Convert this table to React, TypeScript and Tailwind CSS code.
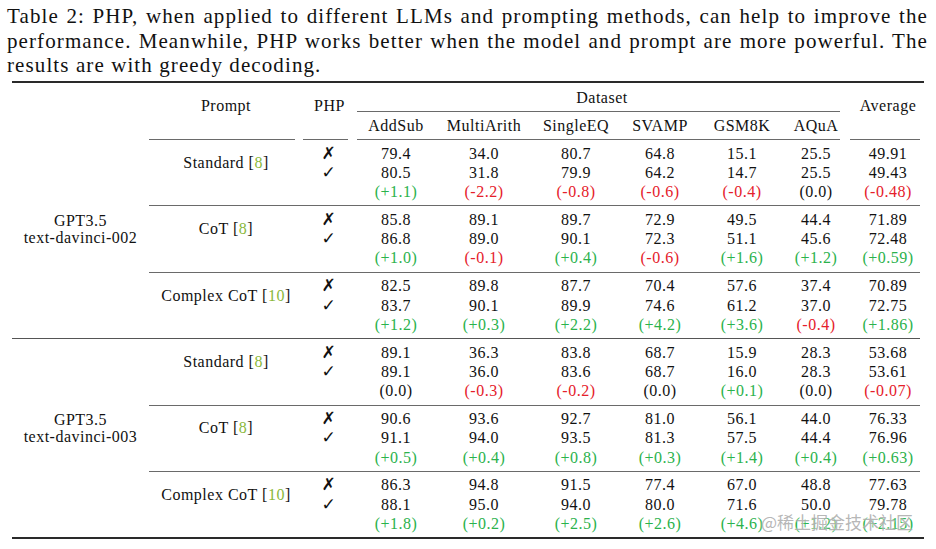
import React from "react";

type Delta = { t: string; c: "g" | "r" | "k" };
type Group = { prompt: string; cite: string; x: string[]; v: string[]; d: Delta[] };

const g = (t: string): Delta => ({ t, c: "g" });
const r = (t: string): Delta => ({ t, c: "r" });
const k = (t: string): Delta => ({ t, c: "k" });

const block1: Group[] = [
  {
    prompt: "Standard",
    cite: "8",
    x: ["79.4", "34.0", "80.7", "64.8", "15.1", "25.5", "49.91"],
    v: ["80.5", "31.8", "79.9", "64.2", "14.7", "25.5", "49.43"],
    d: [g("(+1.1)"), r("(-2.2)"), r("(-0.8)"), r("(-0.6)"), r("(-0.4)"), k("(0.0)"), r("(-0.48)")],
  },
  {
    prompt: "CoT",
    cite: "8",
    x: ["85.8", "89.1", "89.7", "72.9", "49.5", "44.4", "71.89"],
    v: ["86.8", "89.0", "90.1", "72.3", "51.1", "45.6", "72.48"],
    d: [g("(+1.0)"), r("(-0.1)"), g("(+0.4)"), r("(-0.6)"), g("(+1.6)"), g("(+1.2)"), g("(+0.59)")],
  },
  {
    prompt: "Complex CoT",
    cite: "10",
    x: ["82.5", "89.8", "87.7", "70.4", "57.6", "37.4", "70.89"],
    v: ["83.7", "90.1", "89.9", "74.6", "61.2", "37.0", "72.75"],
    d: [g("(+1.2)"), g("(+0.3)"), g("(+2.2)"), g("(+4.2)"), g("(+3.6)"), r("(-0.4)"), g("(+1.86)")],
  },
];

const block2: Group[] = [
  {
    prompt: "Standard",
    cite: "8",
    x: ["89.1", "36.3", "83.8", "68.7", "15.9", "28.3", "53.68"],
    v: ["89.1", "36.0", "83.6", "68.7", "16.0", "28.3", "53.61"],
    d: [k("(0.0)"), r("(-0.3)"), r("(-0.2)"), k("(0.0)"), g("(+0.1)"), k("(0.0)"), r("(-0.07)")],
  },
  {
    prompt: "CoT",
    cite: "8",
    x: ["90.6", "93.6", "92.7", "81.0", "56.1", "44.0", "76.33"],
    v: ["91.1", "94.0", "93.5", "81.3", "57.5", "44.4", "76.96"],
    d: [g("(+0.5)"), g("(+0.4)"), g("(+0.8)"), g("(+0.3)"), g("(+1.4)"), g("(+0.4)"), g("(+0.63)")],
  },
  {
    prompt: "Complex CoT",
    cite: "10",
    x: ["86.3", "94.8", "91.5", "77.4", "67.0", "48.8", "77.63"],
    v: ["88.1", "95.0", "94.0", "80.0", "71.6", "50.0", "79.78"],
    d: [g("(+1.8)"), g("(+0.2)"), g("(+2.5)"), g("(+2.6)"), g("(+4.6)"), g("(+1.2)"), g("(+2.15)")],
  },
];

const colW = ["w-[80px]", "w-[96px]", "w-[88px]", "w-[80px]", "w-[84px]", "w-[64px]", "w-[80px]"];
const heads = ["AddSub", "MultiArith", "SingleEQ", "SVAMP", "GSM8K", "AQuA"];

const colorOf = (c: "g" | "r" | "k") =>
  c === "g" ? "text-[#2bb24c]" : c === "r" ? "text-[#e5202a]" : "text-[#111]";

function Cite({ n }: { n: string }) {
  return (
    <span>
      [<span className="text-[#8ab83a]">{n}</span>]
    </span>
  );
}

function GroupRows({ grp, last }: { grp: Group; last: boolean }) {
  return (
    <div className="flex flex-col">
      <div className="flex pt-[3.5px] pb-[4px]">
        <div className="w-[154px] flex flex-col">
          <div className="h-[38.6px] flex items-center justify-center">
            <span>
              {grp.prompt} <Cite n={grp.cite} />
            </span>
          </div>
        </div>
        <div className="w-[53px] pr-[2px] flex flex-col items-center [font-family:DejaVu_Sans,sans-serif] text-[17px] tracking-normal">
          <div className="h-[19.3px] leading-[19.3px] font-bold">✗</div>
          <div className="h-[19.3px] leading-[19.3px]">✓</div>
          <div className="h-[19.3px]"></div>
        </div>
        {colW.map((w, i) => (
          <div key={i} className={`${w} flex flex-col items-center`}>
            <div className="h-[19.3px] leading-[19.3px]">{grp.x[i]}</div>
            <div className="h-[19.3px] leading-[19.3px]">{grp.v[i]}</div>
            <div className={`h-[19.3px] leading-[19.3px] ${colorOf(grp.d[i].c)}`}>{grp.d[i].t}</div>
          </div>
        ))}
      </div>
      {last ? null : <div className="h-[1px] w-[771px] bg-[#6a6a6a]"></div>}
    </div>
  );
}

function Block({ groups, model }: { groups: Group[]; model: string }) {
  return (
    <div className="flex flex-col">
      <div className="flex">
        <div className="w-[137px] flex flex-col items-center justify-center pb-[20px] leading-[17px]">
          <div>GPT3.5</div>
          <div>{model}</div>
        </div>
        <div className="w-[779px] flex flex-col">
          {groups.map((grp, i) => (
            <GroupRows key={i} grp={grp} last={i === groups.length - 1} />
          ))}
        </div>
      </div>
    </div>
  );
}

export default function App() {
  return (
    <div className="relative w-[936px] h-[549px] overflow-hidden bg-white text-[#111] [font-family:Liberation_Serif,serif]">
      {/* caption */}
      <div className="pl-[7px] pt-[4px] w-[928px] text-[21px] leading-[24.5px] tracking-[1.1px]">
        <div className="text-justify [text-align-last:justify]">
          Table 2: PHP, when applied to different LLMs and prompting methods, can help to improve the
        </div>
        <div className="text-justify [text-align-last:justify]">
          performance. Meanwhile, PHP works better when the model and prompt are more powerful. The
        </div>
        <div>results are with greedy decoding.</div>
      </div>

      {/* top rule */}
      <div className="ml-[12px] mt-[3.5px] w-[912px] h-[2px] bg-[#2a2a2a]"></div>

      <div className="ml-[12px] w-[916px] text-[16px] tracking-[0.5px]">
        {/* header */}
        <div className="flex">
          <div className="w-[137px]"></div>
          <div className="w-[154px] flex flex-col">
            <div className="h-[56px] flex items-center justify-center pb-[10px]">Prompt</div>
            <div className="h-[1px] mr-[8px] bg-[#6a6a6a]"></div>
          </div>
          <div className="w-[53px] flex flex-col">
            <div className="h-[56px] flex items-center justify-center pb-[10px]">PHP</div>
            <div className="h-[1px] mr-[8px] bg-[#6a6a6a]"></div>
          </div>
          <div className="w-[492px] flex flex-col">
            <div className="h-[28px] flex items-center justify-center pt-[1px]">Dataset</div>
            <div className="h-[1px] ml-[1px] mr-[8px] bg-[#6a6a6a]"></div>
            <div className="h-[27px] flex">
              {heads.map((h, i) => (
                <div key={i} className={`${colW[i]} flex items-center justify-center`}>
                  {h}
                </div>
              ))}
            </div>
            <div className="h-[1px] ml-[1px] mr-[8px] bg-[#6a6a6a]"></div>
          </div>
          <div className="w-[80px] flex flex-col">
            <div className="h-[56px] flex items-center justify-center pb-[10px]">Average</div>
            <div className="h-[1px] ml-[2px] mr-[8px] bg-[#6a6a6a]"></div>
          </div>
        </div>

        <Block groups={block1} model="text-davinci-002" />
        <div className="h-[1px] w-[908px] bg-[#555]"></div>
        <Block groups={block2} model="text-davinci-003" />
        <div className="h-[2px] w-[912px] bg-[#2a2a2a]"></div>
      </div>

      {/* watermark */}
      <div className="absolute left-[761px] top-[510px] text-[17px] leading-[24px] text-[#a3a3a3]/80 [font-family:Noto_Sans_CJK_SC,sans-serif] [text-shadow:0_0_2px_rgba(255,255,255,0.9)]">
        @稀土掘金技术社区
      </div>
    </div>
  );
}
